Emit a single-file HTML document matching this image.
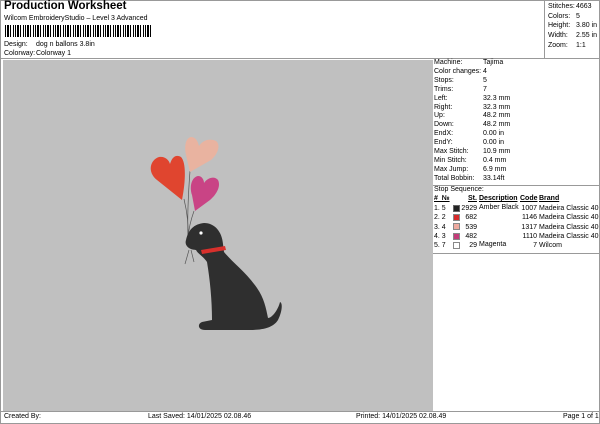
<!DOCTYPE html>
<html><head><style>
body{margin:0;width:600px;height:424px;background:#fff;position:relative;overflow:hidden;font-family:"Liberation Sans",Arial,sans-serif;font-size:7px;color:#000}
div{position:absolute;white-space:nowrap}
.l{background:#999}
</style></head><body>
<div style="left:0;top:0;width:598px;height:422px;border:1px solid #999"></div>
<div style="left:4px;top:0;font-size:11.5px;font-weight:bold">Production Worksheet</div>
<div style="left:4px;top:15px">Wilcom EmbroideryStudio – Level 3 Advanced</div>
<div style="left:5px;top:25px;width:148px;height:12px;background:repeating-linear-gradient(90deg,#000 0 1px,#fff 1px 2px,#000 2px 4px,#fff 4px 5px,#000 5px 6px,#fff 6px 8px,#000 8px 9px,#fff 9px 10px)"></div>
<div style="left:4px;top:41px">Design:</div><div style="left:36px;top:41px">dog n ballons 3.8in</div>
<div style="left:4px;top:50px">Colorway:</div><div style="left:36px;top:50px">Colorway 1</div>
<div class="l" style="left:544px;top:0;width:1px;height:58px"></div>
<div class="l" style="left:0;top:58px;width:600px;height:1px"></div>
<div style="left:548px;top:2px;line-height:9.7px">Stitches:<br>Colors:<br>Height:<br>Width:<br>Zoom:</div>
<div style="left:576px;top:2px;line-height:9.7px">4663<br>5<br>3.80 in<br>2.55 in<br>1:1</div>
<div style="left:3px;top:60px;width:430px;height:351px;background:#c0c0c0"></div>
<div style="left:434px;top:59px;line-height:8.9px">Machine:<br>Color changes:<br>Stops:<br>Trims:<br>Left:<br>Right:<br>Up:<br>Down:<br>EndX:<br>EndY:<br>Max Stitch:<br>Min Stitch:<br>Max Jump:<br>Total Bobbin:</div>
<div style="left:483px;top:59px;line-height:8.9px">Tajima<br>4<br>5<br>7<br>32.3 mm<br>32.3 mm<br>48.2 mm<br>48.2 mm<br>0.00 in<br>0.00 in<br>10.9 mm<br>0.4 mm<br>6.9 mm<br>33.14ft</div>
<div class="l" style="left:433px;top:185px;width:167px;height:1px"></div>
<div style="left:434px;top:186px">Stop Sequence:</div>
<div style="left:434px;top:195px;font-weight:bold;text-decoration:underline">#&nbsp; №</div>
<div style="left:468px;top:195px;font-weight:bold;text-decoration:underline">St.</div>
<div style="left:479px;top:195px;font-weight:bold;text-decoration:underline">Description</div>
<div style="left:520px;top:195px;font-weight:bold;text-decoration:underline">Code</div>
<div style="left:539px;top:195px;font-weight:bold;text-decoration:underline">Brand</div>
<div style="left:434px;top:204px;line-height:9.3px">1. 5<br>2. 2<br>3. 4<br>4. 3<br>5. 7</div>
<div style="left:453px;top:205px;width:5px;height:5px;background:#222;border:1px solid #666"></div>
<div style="left:453px;top:214px;width:5px;height:5px;background:#d52a2a;border:1px solid #888"></div>
<div style="left:453px;top:223px;width:5px;height:5px;background:#eeaaa0;border:1px solid #888"></div>
<div style="left:453px;top:233px;width:5px;height:5px;background:#c43c7a;border:1px solid #888"></div>
<div style="left:453px;top:242px;width:5px;height:5px;background:#fff;border:1px solid #888"></div>
<div style="left:458px;top:204px;width:19px;text-align:right;line-height:9.3px">2929<br>682<br>539<br>482<br>29</div>
<div style="left:479px;top:204px">Amber Black</div>
<div style="left:479px;top:241px">Magenta</div>
<div style="left:518px;top:204px;width:19px;text-align:right;line-height:9.3px">1007<br>1146<br>1317<br>1110<br>7</div>
<div style="left:539px;top:204px;line-height:9.3px">Madeira Classic 40<br>Madeira Classic 40<br>Madeira Classic 40<br>Madeira Classic 40<br>Wilcom</div>
<div class="l" style="left:433px;top:253px;width:167px;height:1px"></div>
<div class="l" style="left:0;top:411px;width:600px;height:1px"></div>
<div style="left:4px;top:413px">Created By:</div>
<div style="left:148px;top:413px">Last Saved: 14/01/2025 02.08.46</div>
<div style="left:356px;top:413px">Printed: 14/01/2025 02.08.49</div>
<div style="left:563px;top:413px">Page 1 of 1</div>
<svg style="position:absolute;left:0;top:0" width="600" height="424">
<g stroke="#555" stroke-width="0.7" fill="none">
<path d="M184 199 Q189 220 188 238"/><path d="M194 211 Q189 225 188 238"/><path d="M190 171 Q187 210 188 238"/>
<path d="M189 250 L185 264 M191 250 L194 262"/>
</g>
<path d="M182 200 L157 180 C147 172 150 160 159 157 C165 156 169 160 170 164 C172 157 176 154 181 157 C186 162 186 180 182 200 Z" fill="#e0452f"/>
<path d="M190 172 L186 155 C184 145 186 138 191 137 C196 137 198 142 199 146 C203 140 210 138 216 141 C221 145 218 154 211 160 Z" fill="#e9b3a0"/>
<path d="M195 211 L192 195 C189 186 192 177 198 176 C202 176 204 180 204 183 C208 177 215 176 218 180 C221 186 217 194 210 200 Z" fill="#c94485"/>
<path d="M186 240 C188 230 194 224 204 223 C215 223 222 232 223 244 L224 252 C232 262 246 272 257 288 C264 298 266 308 268 318 C272 318 278 310 280 302 C283 303 282 312 278 320 C273 328 262 330 250 330 L205 330 C198 330 197 324 202 322 L212 320 C212 300 210 280 207 262 C203 256 198 254 196 250 C190 250 184 246 186 240 Z" fill="#2f2f2f"/>
<circle cx="201" cy="233" r="1.6" fill="#fff"/>
<path d="M201 250 L225 246 L226 250 L202 254 Z" fill="#d8302c"/>
</svg>
</body></html>
